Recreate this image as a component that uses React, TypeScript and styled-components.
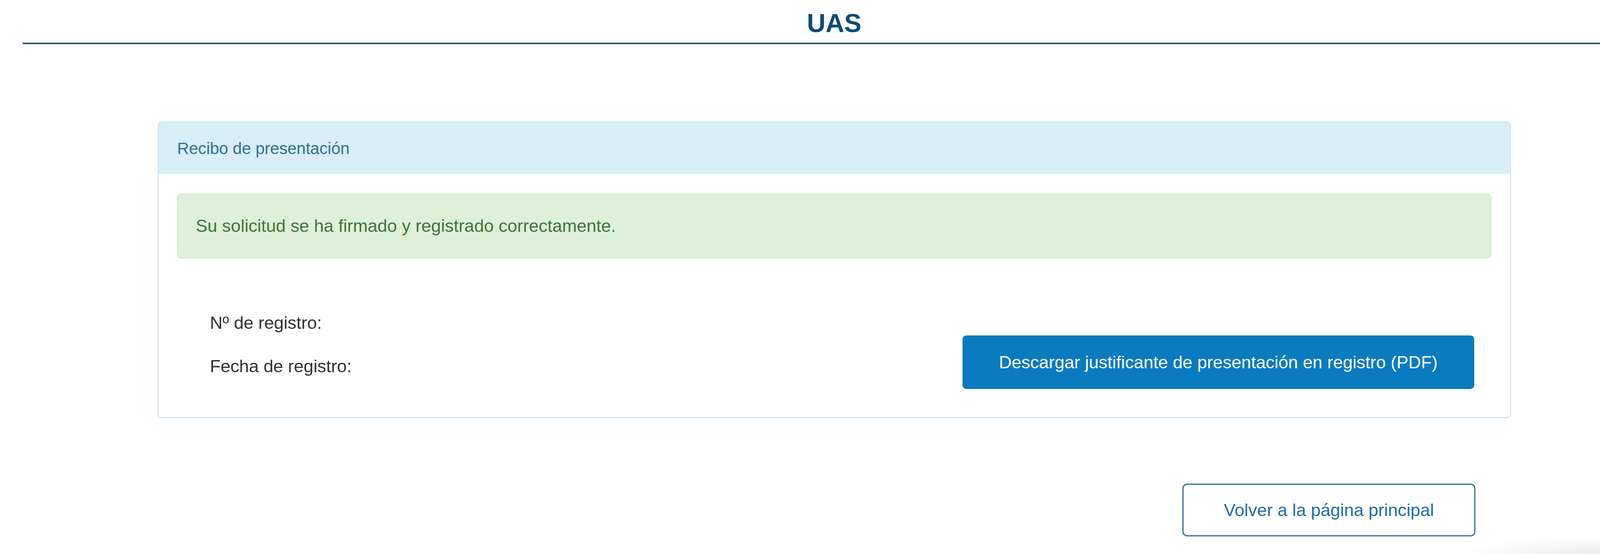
import React from "react";
import styled, { createGlobalStyle } from "styled-components";

/* Horizontal measures are kept proportional to the frame width (reference: 4400px),
   vertical measures are in pixels. */
const vw = (px: number) => `${(px / 44).toFixed(4)}vw`;

const GlobalStyle = createGlobalStyle`
  html, body {
    margin: 0;
    padding: 0;
    overflow: hidden;
    background: #ffffff;
  }
  body {
    font-family: "Liberation Sans", Arial, sans-serif;
    color: #333333;
  }
  * { box-sizing: border-box; }
`;

const Page = styled.div`
  margin-left: ${vw(62)};
  min-height: 1417px;
`;

const TopBar = styled.header`
  padding: 23px 0 13px ${vw(126)};
  border-bottom: 4px solid #2e5669;
  text-align: center;
`;

const Title = styled.h1`
  margin: 0;
  font-size: 66px;
  line-height: 73px;
  font-weight: 700;
  color: #0d4b72;
`;

const Panel = styled.section`
  width: ${vw(3721)};
  margin: 198px 0 0 ${vw(372)};
  border: 2px solid #c6e2ec;
  border-radius: 11px;
  background: #ffffff;
  box-shadow: 0 3px 4px rgba(0, 0, 0, 0.04);
  overflow: hidden;
`;

const PanelHeading = styled.div`
  background: #d9edf7;
  padding: 37px ${vw(51)} 35px;
  font-size: 42px;
  line-height: 60px;
  color: #31708f;
`;

const PanelBody = styled.div`
  padding: 50px ${vw(51)} 72px ${vw(50)};
`;

const Alert = styled.div`
  background: #dff0d8;
  border: 2px solid #d3e8c8;
  border-radius: 10px;
  padding: 49px ${vw(50)};
  font-size: 45px;
  line-height: 64px;
  color: #3c763d;
`;

const InfoRow = styled.div`
  display: flex;
  justify-content: space-between;
  align-items: flex-start;
  margin-top: 133px;
  padding: 0 ${vw(48)} 0 ${vw(91)};
`;

const Labels = styled.div`
  display: flex;
  flex-direction: column;
  gap: 47px;
`;

const Label = styled.div`
  font-size: 45px;
  line-height: 64px;
  color: #333333;
`;

const PrimaryButton = styled.button`
  margin-top: 64px;
  width: ${vw(1407)};
  height: 137px;
  display: flex;
  align-items: center;
  justify-content: center;
  padding: 0;
  border: 2px solid #0a77b8;
  border-radius: 10px;
  background: #0b7bbf;
  color: #ffffff;
  font-family: "Liberation Sans", Arial, sans-serif;
  font-size: 45px;
  line-height: 64px;
  white-space: nowrap;
  cursor: pointer;
`;

const Footer = styled.div`
  width: ${vw(3721)};
  margin: 168px 0 0 ${vw(372)};
  display: flex;
  justify-content: flex-end;
  padding-right: ${vw(98)};
`;

const SecondaryButton = styled.button`
  width: ${vw(805)};
  height: 135px;
  display: flex;
  align-items: center;
  justify-content: center;
  padding: 0;
  border: 3px solid #36708f;
  border-radius: 12px;
  background: #ffffff;
  color: #1e6ea3;
  font-family: "Liberation Sans", Arial, sans-serif;
  font-size: 45px;
  line-height: 64px;
  white-space: nowrap;
  cursor: pointer;
`;

const CornerShade = styled.div`
  position: fixed;
  right: 0;
  bottom: 0;
  width: ${vw(520)};
  height: 60px;
  pointer-events: none;
  background: radial-gradient(ellipse 100% 100% at 100% 100%, rgba(0, 0, 0, 0.08), rgba(0, 0, 0, 0) 75%);
`;

export default function App() {
  return (
    <>
      <GlobalStyle />
      <Page>
        <TopBar>
          <Title>UAS</Title>
        </TopBar>
        <Panel>
          <PanelHeading>Recibo de presentación</PanelHeading>
          <PanelBody>
            <Alert>Su solicitud se ha firmado y registrado correctamente.</Alert>
            <InfoRow>
              <Labels>
                <Label>Nº de registro:</Label>
                <Label>Fecha de registro:</Label>
              </Labels>
              <PrimaryButton type="button">
                Descargar justificante de presentación en registro (PDF)
              </PrimaryButton>
            </InfoRow>
          </PanelBody>
        </Panel>
        <Footer>
          <SecondaryButton type="button">Volver a la página principal</SecondaryButton>
        </Footer>
      </Page>
      <CornerShade />
    </>
  );
}
